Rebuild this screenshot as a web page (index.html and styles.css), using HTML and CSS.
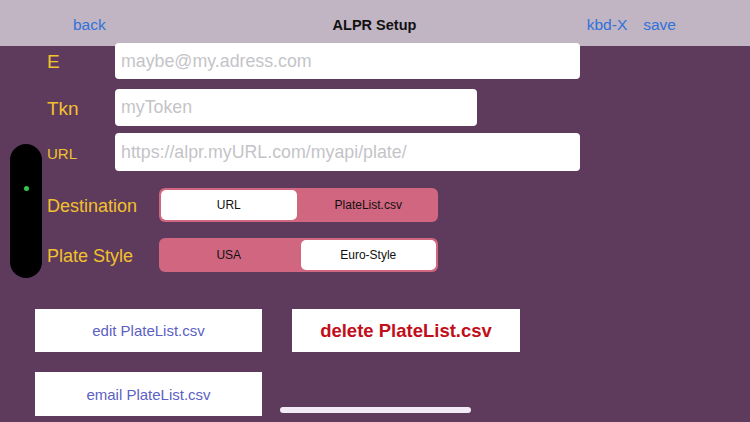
FILE: index.html
```html
<!DOCTYPE html>
<html>
<head>
    <meta charset="utf-8">
    <title>ALPR Setup</title>
    <link rel="stylesheet" href="styles.css">
</head>
<body>
<div id="screen">
    <header class="navbar">
        <div class="nav-left"><a class="nav-link">back</a></div>
        <div class="nav-title">ALPR Setup</div>
        <div class="nav-right">
            <a class="nav-link">kbd-X</a>
            <a class="nav-link">save</a>
        </div>
    </header>

    <div class="handle"><span class="handle-dot"></span></div>

    <div class="form">
        <div class="row row-email">
            <label class="label">E</label>
            <input class="field field-wide" type="text" placeholder="maybe@my.adress.com"/>
        </div>
        <div class="row row-token">
            <label class="label">Tkn</label>
            <input class="field field-short" type="text" placeholder="myToken"/>
        </div>
        <div class="row row-url">
            <label class="label label-small">URL</label>
            <input class="field field-wide" type="text" placeholder="https://alpr.myURL.com/myapi/plate/"/>
        </div>
        <div class="row row-dest">
            <label class="label label-seg">Destination</label>
            <div class="segmented">
                <button class="seg seg-on">URL</button>
                <button class="seg">PlateList.csv</button>
            </div>
        </div>
        <div class="row row-style">
            <label class="label label-seg">Plate Style</label>
            <div class="segmented">
                <button class="seg">USA</button>
                <button class="seg seg-on">Euro-Style</button>
            </div>
        </div>
    </div>

    <div class="actions">
        <button class="action">edit PlateList.csv</button>
        <button class="action action-danger">delete PlateList.csv</button>
        <button class="action">email PlateList.csv</button>
    </div>

    <div class="home-indicator"></div>
</div>
</body>
</html>
```

FILE: styles.css
```css
html, body {
    margin: 0;
    padding: 0;
}

body {
    font-family: "Liberation Sans", Arial, sans-serif;
    background-color: #5e3b5c;
}

#screen {
    position: relative;
    width: 750px;
    height: 422px;
    overflow: hidden;
    background-color: #5e3b5c;
}

.navbar {
    box-sizing: border-box;
    height: 46px;
    background-color: #c1b4c3;
    display: grid;
    grid-template-columns: 1fr auto 1fr;
    align-items: center;
    padding: 4px 74px 0 73px;
}

.nav-right {
    display: flex;
    justify-content: flex-end;
    gap: 16px;
}

.nav-link {
    color: #2f72d8;
    font-size: 15.5px;
    cursor: pointer;
}

.nav-title {
    color: #111;
    font-size: 14.5px;
    font-weight: bold;
}

.handle {
    position: absolute;
    left: 10px;
    top: 144px;
    width: 32px;
    height: 134px;
    border-radius: 16px;
    background-color: #000;
}

.handle-dot {
    position: absolute;
    left: 14px;
    top: 42px;
    width: 5px;
    height: 5px;
    border-radius: 50%;
    background-color: #2fc84a;
}

.form {
    position: relative;
    margin-top: -3px;
    padding-left: 47px;
    display: flex;
    flex-direction: column;
}

.row {
    display: flex;
    align-items: center;
}

.row-token {
    margin-top: 10px;
}

.row-url {
    margin-top: 7px;
}

.row-dest {
    margin-top: 17px;
}

.row-style {
    margin-top: 16px;
}

.label {
    width: 68px;
    color: #f2c12e;
    font-size: 19px;
    padding-top: 2px;
}

.label-small {
    font-size: 15px;
}

.label-seg {
    width: 112px;
    font-size: 18px;
}

.field {
    box-sizing: border-box;
    height: 36px;
    border: none;
    border-radius: 4px;
    background-color: #fff;
    padding: 0 6px;
    font-family: "Liberation Sans", Arial, sans-serif;
    font-size: 17.8px;
    color: #222;
    outline: none;
}

.row-token .field {
    height: 37px;
}

.row-url .field {
    height: 38px;
}

.field::placeholder {
    color: #c4c4c8;
}

.field-wide {
    width: 465px;
}

.field-short {
    width: 362px;
}

.segmented {
    box-sizing: border-box;
    width: 279px;
    height: 34px;
    padding: 2px;
    gap: 4px;
    border-radius: 6px;
    background-color: #d0667f;
    display: flex;
}

.seg {
    flex: 1;
    border: none;
    border-radius: 5px;
    background: transparent;
    font-family: "Liberation Sans", Arial, sans-serif;
    font-size: 12px;
    color: #111;
    padding: 0;
}

.seg-on {
    background-color: #fff;
}

.actions {
    margin-top: 37px;
    padding-left: 35px;
    display: grid;
    grid-template-columns: 227px 228px;
    grid-auto-rows: 43px;
    column-gap: 30px;
    row-gap: 20px;
}

.action {
    border: none;
    background-color: #fff;
    color: #5c5fc4;
    font-family: "Liberation Sans", Arial, sans-serif;
    font-size: 15px;
    padding: 0;
}

.action-danger {
    color: #c20e1a;
    font-size: 18.5px;
    font-weight: bold;
}

.actions .action:nth-child(3) {
    height: 44px;
}

.home-indicator {
    position: absolute;
    left: 280px;
    top: 407px;
    width: 191px;
    height: 6px;
    border-radius: 3px;
    background-color: #f2eaf5;
}
```
